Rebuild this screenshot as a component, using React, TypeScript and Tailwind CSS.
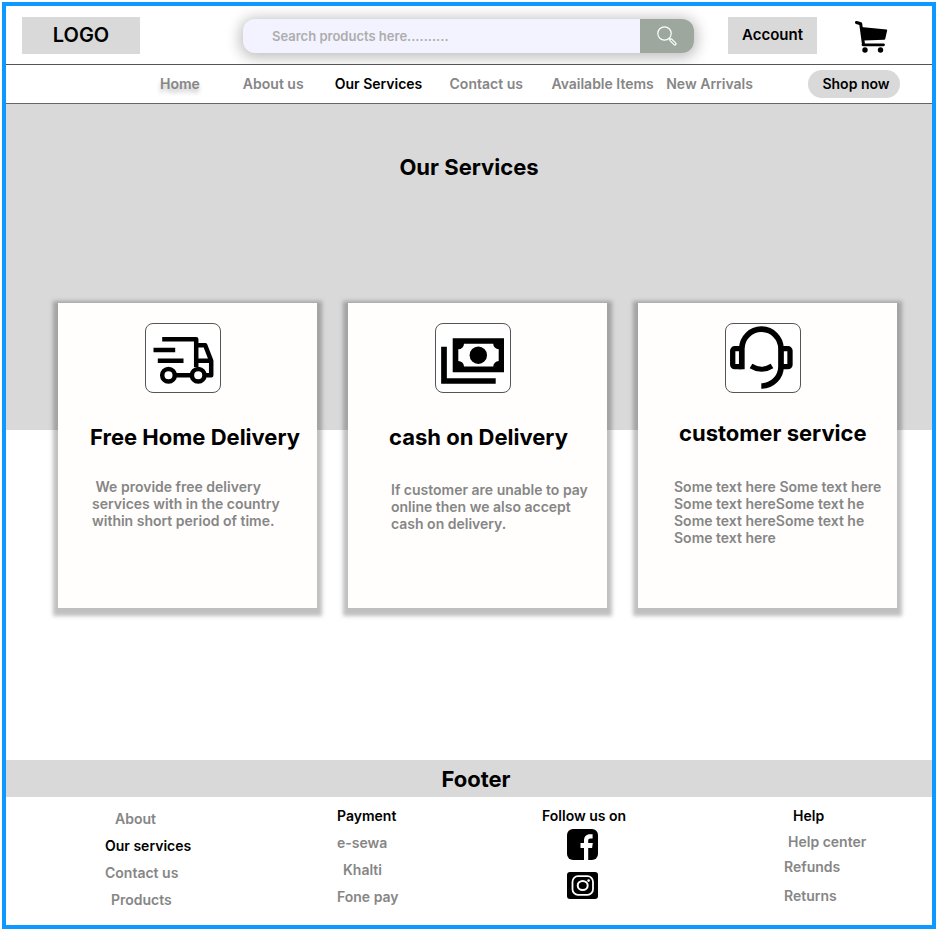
import React from "react";

const navLinks = [
  { label: "Home", className: "text-[#868686] [text-shadow:0_4px_4px_rgba(0,0,0,0.25)]" },
  { label: "About us", className: "text-[#868686]" },
  { label: "Our Services", className: "text-black" },
  { label: "Contact us", className: "text-[#868686]" },
  { label: "Available Items", className: "text-[#868686]" },
  { label: "New Arrivals", className: "text-[#868686]" },
];

function SearchIcon() {
  return (
    <svg viewBox="0 0 20 20" className="size-5" fill="none" stroke="white" strokeWidth="1.2" aria-hidden="true">
      <circle cx="7.5" cy="7.5" r="6.7" />
      <path d="M12.2 12.2l1.3 1.3" />
      <path d="M13 14.6a1.15 1.15 0 0 1 1.6-1.6l4.2 4.2a1.15 1.15 0 0 1-1.6 1.6z" />
    </svg>
  );
}

function CartIcon() {
  return (
    <svg viewBox="0 0 33 32" className="h-8 w-[33px]" aria-hidden="true">
      <path
        d="M1.5 1.5l4.2 1.3L8.4 22.5"
        fill="none"
        stroke="black"
        strokeWidth="3"
        strokeLinecap="round"
        strokeLinejoin="round"
      />
      <path d="M6 6l25.5 2.4c.5 0 .8.4.7.9l-2 8.7c-.1.5-.5.8-1 .8L8.5 19.5z" />
      <path d="M8 23.800h20.500" stroke="black" strokeWidth="2.800" strokeLinecap="round" />
      <circle cx="10" cy="29" r="2.700" />
      <circle cx="25.500" cy="29" r="2.700" />
    </svg>
  );
}

function TruckIcon() {
  return (
    <svg viewBox="0 0 74 68" className="h-full w-full" fill="none" stroke="black" strokeWidth="4.5" aria-hidden="true">
      <path d="M16.200 15.300H50.200V43" strokeLinejoin="round" />
      <path d="M7.500 26H29.200M11.800 36.700H37.500" />
      <path d="M51 21.300H59.200L65.200 36.700V51.300H60M51 36.700H65.200M30 51.300H45" strokeLinejoin="round" />
      <circle cx="22.500" cy="51.300" r="6.300" />
      <circle cx="52.200" cy="51.300" r="6.300" />
    </svg>
  );
}

function CashIcon() {
  return (
    <svg viewBox="0 0 74 68" className="h-full w-full" aria-hidden="true">
      <path d="M8 22.700V57H59.700" fill="none" stroke="black" strokeWidth="5.700" />
      <path
        fillRule="evenodd"
        d="M16.700 14.300H68V48.300H16.700zM28 19.700A5.700 5.700 0 0 1 22.300 25.300V37A5.700 5.700 0 0 1 28 42.500H57.200A5.700 5.700 0 0 1 62.700 37V25.300A5.700 5.700 0 0 1 57.200 19.700z"
      />
      <circle cx="42.300" cy="31.200" r="8.700" />
    </svg>
  );
}

function HeadsetIcon() {
  return (
    <svg viewBox="0 0 74 68" className="h-full w-full" fill="none" stroke="black" aria-hidden="true">
      <path d="M15.800 45.300V24.800a19.600 19.600 0 0 1 39.200 0V42.400a19.600 19.600 0 0 1-19.700 19.600" strokeWidth="5.700" />
      <path d="M15.800 42.700H8.700a2 2 0 0 1-2-2V26.700a2 2 0 0 1 2-2h7.100" strokeWidth="5.300" />
      <path d="M55 24.700h7a2 2 0 0 1 2 2v14a2 2 0 0 1-2 2H55" strokeWidth="5.300" />
      <path d="M25 42q10.500 6.500 21 0" strokeWidth="5" />
    </svg>
  );
}

function FacebookIcon() {
  return (
    <svg viewBox="0 0 31 31" className="size-[31px]" aria-hidden="true">
      <rect width="31" height="31" rx="6" />
      <path
        d="M17 31V19h-3.500v-5H17V11.500c0-4 2.300-6.300 6-6.300h2.600v4.300h-2.200c-1.500 0-2.200.8-2.200 2.200V14h4.600l-.7 5h-3.900V31z"
        fill="white"
      />
    </svg>
  );
}

function InstagramIcon() {
  return (
    <svg viewBox="0 0 31 27" className="h-[27px] w-[31px]" fill="none" stroke="white" aria-hidden="true">
      <rect width="31" height="27" rx="3" fill="black" stroke="none" />
      <rect x="5.500" y="4.200" width="20.500" height="18.600" rx="5.500" strokeWidth="1.800" />
      <ellipse cx="15.700" cy="13.500" rx="5" ry="4.500" strokeWidth="2" />
      <circle cx="21.600" cy="8.600" r="1.300" fill="white" stroke="none" />
    </svg>
  );
}

const services = [
  {
    title: "Free Home Delivery",
    icon: <TruckIcon />,
    lines: ["\u00a0We provide free delivery", "services with in the country", "within short period of time."],
    titleClass: "mt-7 pl-8",
    textClass: "mt-[25px] pl-[34px]",
  },
  {
    title: "cash on Delivery",
    icon: <CashIcon />,
    lines: ["If customer are unable to pay", "online then we also accept", "cash on delivery."],
    titleClass: "mt-7 pl-[41px]",
    textClass: "mt-7 pl-[43px]",
  },
  {
    title: "customer service",
    icon: <HeadsetIcon />,
    lines: ["Some text here Some text here", "Some text hereSome text he", "Some text hereSome text he", "Some text here"],
    titleClass: "mt-6 pl-[41px]",
    textClass: "mt-[29px] pl-9",
  },
];

export default function App() {
  return (
    <div className="mt-0.5 mb-px ml-0.5 border-4 border-[#0d99ff] bg-white font-['Inter',sans-serif] text-sm font-semibold text-black">
      <header>
        <div className="flex h-[59px] items-center overflow-hidden border-b border-[#555] pr-11 pl-4">
          <a href="#" className="flex h-[37px] w-[118px] items-center justify-center bg-[#d9d9d9] text-xl">
            LOGO
          </a>
          <form className="mt-0.5 ml-[103px] flex h-[34px] flex-1 overflow-hidden rounded-xl bg-[#f3f3ff] shadow-[0_2px_14px_3px_rgba(0,0,0,0.25)]">
            <input
              type="text"
              aria-label="Search products"
              placeholder="Search products here.........."
              className="min-w-0 flex-1 bg-transparent pl-[29px] text-[13px] outline-none placeholder:text-[#adadad]"
            />
            <button type="button" aria-label="Search" className="flex w-[54px] items-center justify-center bg-[#9da79e]">
              <SearchIcon />
            </button>
          </form>
          <button
            type="button"
            className="ml-[34px] flex h-[37px] w-[89px] items-center justify-center bg-[#d9d9d9] text-[15px]"
          >
            Account
          </button>
          <button type="button" aria-label="Cart" className="mt-1 ml-[38px]">
            <CartIcon />
          </button>
        </div>
        <nav className="flex h-[39px] items-center border-b border-[#666] pr-8 pl-[154px]">
          <div className="grid flex-1 grid-cols-[83fr_92fr_115fr_102fr_115fr_142fr] whitespace-nowrap">
            {navLinks.map((link) => (
              <a key={link.label} href="#" className={link.className}>
                {link.label}
              </a>
            ))}
          </div>
          <button type="button" className="h-7 w-[92px] rounded-full bg-[#d9d9d9] pl-1 whitespace-nowrap">
            Shop now
          </button>
        </nav>
      </header>

      <main>
        <section className="h-[326px] bg-[#d9d9d9] pt-[47px]">
          <h1 className="text-center text-[22px] leading-8 font-bold">Our Services</h1>
        </section>
        <section className="-mt-[127px] mb-[152px] grid grid-cols-3 gap-[31px] pr-[35px] pl-[52px]">
          {services.map((service) => (
            <article
              key={service.title}
              className="min-h-[305px] bg-[#fffefc] pt-5 shadow-[0_3px_4px_5px_rgba(0,0,0,0.25)]"
            >
              <div className="ml-[87px] h-[70px] w-[76px] rounded-lg border border-[#555] bg-white">{service.icon}</div>
              <h2 className={"text-[22px] leading-8 font-bold whitespace-nowrap " + service.titleClass}>
                {service.title}
              </h2>
              <p className={"leading-[17px] whitespace-nowrap text-[#868686] " + service.textClass}>
                {service.lines.map((line, i) => (
                  <span key={i} className="block">
                    {line}
                  </span>
                ))}
              </p>
            </article>
          ))}
        </section>
      </main>

      <footer>
        <h2 className="bg-[#d9d9d9] pt-[3px] pb-0.5 pl-3.5 text-center text-[22px] leading-8 font-bold">Footer</h2>
        <div className="grid min-h-32 grid-cols-[232fr_205fr_242fr_148fr] pt-[5px] pl-[99px] leading-[27px] text-[#868686]">
          <ul className="pt-[3px]">
            <li className="pl-2.5"><a href="#">About</a></li>
            <li className="text-black"><a href="#">Our services</a></li>
            <li><a href="#">Contact us</a></li>
            <li className="pl-1.5"><a href="#">Products</a></li>
          </ul>
          <div>
            <h3 className="text-black">Payment</h3>
            <ul>
              <li><a href="#">e-sewa</a></li>
              <li className="pl-1.5"><a href="#">Khalti</a></li>
              <li><a href="#">Fone pay</a></li>
            </ul>
          </div>
          <div>
            <h3 className="text-black">Follow us on</h3>
            <div className="flex flex-col gap-3 pl-[25px]">
              <a href="#" aria-label="Facebook"><FacebookIcon /></a>
              <a href="#" aria-label="Instagram"><InstagramIcon /></a>
            </div>
          </div>
          <div className="pt-px">
            <h3 className="pl-[9px] leading-[26px] text-black">Help</h3>
            <ul className="leading-[25px]">
              <li className="pl-1"><a href="#">Help center</a></li>
              <li><a href="#">Refunds</a></li>
              <li className="mt-1"><a href="#">Returns</a></li>
            </ul>
          </div>
        </div>
      </footer>
    </div>
  );
}
